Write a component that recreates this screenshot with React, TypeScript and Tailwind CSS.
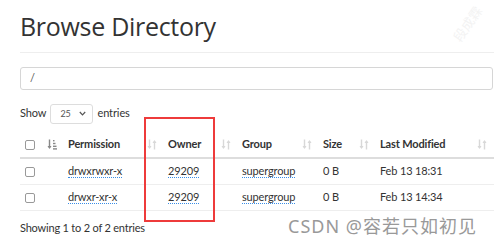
import React from "react";

const SortIcon = ({ active = false }: { active?: boolean }) =>
  active ? (
    <svg width="10" height="11" viewBox="0 0 10 11" className="shrink-0">
      <path d="M2.5 0.5 V9" stroke="#888" strokeWidth="1.4" />
      <path d="M0.5 7 L2.5 10 L4.5 7 Z" fill="#888" />
      <rect x="6" y="1" width="1.5" height="1.4" fill="#888" />
      <rect x="6" y="3.8" width="2.5" height="1.4" fill="#888" />
      <rect x="6" y="6.6" width="3.5" height="1.4" fill="#888" />
      <rect x="6" y="9.2" width="4" height="1.4" fill="#888" />
    </svg>
  ) : (
    <svg width="10" height="11" viewBox="0 0 10 11" className="shrink-0">
      <path d="M2.5 0.5 V9" stroke="#d8d8d8" strokeWidth="1.4" />
      <path d="M0.5 7 L2.5 10 L4.5 7 Z" fill="#d8d8d8" />
      <path d="M7.5 2 V10.5" stroke="#d8d8d8" strokeWidth="1.4" />
      <path d="M5.5 4 L7.5 1 L9.5 4 Z" fill="#d8d8d8" />
    </svg>
  );

const Checkbox = () => (
  <span className="inline-block w-[10px] h-[10px] border border-[#999] rounded-[2px] bg-white" />
);

const Dotted = ({ children }: { children: React.ReactNode }) => (
  <span className="border-b border-dotted border-[#3a8ee6] leading-[14px]">{children}</span>
);

const cols = [
  { w: "w-[40px]", label: "" },
  { w: "w-[100px]", label: "Permission" },
  { w: "w-[74px]", label: "Owner" },
  { w: "w-[81px]", label: "Group" },
  { w: "w-[57px]", label: "Size" },
  { w: "w-[118px]", label: "Last Modified" },
];

const rows = [
  ["drwxrwxr-x", "29209", "supergroup", "0 B", "Feb 13 18:31"],
  ["drwxr-xr-x", "29209", "supergroup", "0 B", "Feb 13 14:34"],
];

export default function App() {
  return (
    <div
      className="relative w-[494px] h-[246px] overflow-hidden bg-white text-[#333]"
      style={{ fontFamily: 'Lato, "Open Sans", sans-serif' }}
    >
      <div className="pl-[20px]">
        <div className="h-[53px] border-b border-[#eee] pt-[9px]">
          <h1
            className="text-[25px] leading-[34px] font-normal text-[#333] tracking-[-0.3px]"
            style={{ fontFamily: '"Open Sans", sans-serif' }}
          >
            Browse Directory
          </h1>
        </div>
        <div className="mt-[14px] h-[23px] mr-[1px] border border-[#d6d6d6] rounded-[3px] flex items-center pl-[9px] text-[11px] text-[#555]">
          /
        </div>
        <div className="mt-[13px] flex items-center h-[21px] text-[11px] tracking-[-0.1px]">
          <span>Show</span>
          <div className="ml-[4px] mr-[4px] w-[43px] h-[20px] border border-[#ddd] rounded-[3px] flex items-center justify-between pl-[9px] pr-[6px] text-[9px] text-[#555]">
            <span>25</span>
            <svg width="7" height="5" viewBox="0 0 7 5">
              <path d="M0.8 1 L3.5 3.8 L6.2 1" stroke="#555" strokeWidth="1.2" fill="none" />
            </svg>
          </div>
          <span>entries</span>
        </div>
        <div className="mt-[8px] w-[700px] text-[11px] tracking-[-0.15px]">
          <div className="flex h-[27px] border-b-2 border-[#ddd] font-bold">
            {cols.map((c, i) => (
              <div key={i} className={`${c.w} shrink-0 flex items-center justify-between pl-[8px] pr-[3px]`}>
                {i === 0 ? (
                  <span className="-ml-[3px] flex items-center">
                    <Checkbox />
                  </span>
                ) : (
                  <span>{c.label}</span>
                )}
                <SortIcon active={i === 0} />
              </div>
            ))}
          </div>
          {rows.map((r, ri) => (
            <div key={ri} className="flex h-[26px] border-b border-[#eee] items-center">
              <div className="w-[40px] shrink-0 pl-[5px] flex items-center">
                <Checkbox />
              </div>
              <div className="w-[100px] shrink-0 pl-[8px]"><Dotted>{r[0]}</Dotted></div>
              <div className="w-[74px] shrink-0 pl-[8px]"><Dotted>{r[1]}</Dotted></div>
              <div className="w-[81px] shrink-0 pl-[8px]"><Dotted>{r[2]}</Dotted></div>
              <div className="w-[57px] shrink-0 pl-[8px]">{r[3]}</div>
              <div className="w-[118px] shrink-0 pl-[8px]">{r[4]}</div>
            </div>
          ))}
        </div>
        <div className="mt-[9px] text-[11px] leading-[16px] tracking-[-0.2px]">Showing 1 to 2 of 2 entries</div>
      </div>

      <div className="absolute left-[144px] top-[117px] w-[71px] h-[105px] border-2 border-[#ee3b3b]" />

      <div
        className="absolute left-[288px] top-[213px] text-[18px] leading-[26px] text-[#999] tracking-[1px]"
        style={{ fontFamily: '"Noto Sans", "Noto Sans CJK SC", sans-serif', textShadow: "0 0 2px #fff" }}
      >
        CSDN @容若只如初见
      </div>
      <div
        className="absolute left-[448px] top-[14px] text-[13px] text-[#f3f3f3] -rotate-[55deg]"
        style={{ fontFamily: '"Noto Sans CJK SC", sans-serif' }}
      >
        段成霖
      </div>
    </div>
  );
}
